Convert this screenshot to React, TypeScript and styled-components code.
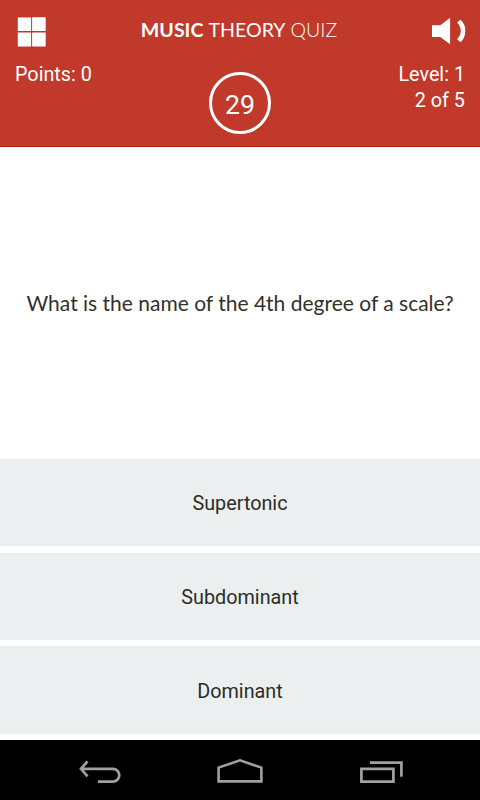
import React from "react";
import styled, { createGlobalStyle } from "styled-components";

const GlobalStyle = createGlobalStyle`
  *, *::before, *::after { box-sizing: border-box; }
  body { margin: 0; background: #fff; }
  button { font: inherit; color: inherit; border: 0; padding: 0; background: none; }
`;

const Screen = styled.div`
  display: flex;
  flex-direction: column;
  width: 480px;
  height: 800px;
  overflow: hidden;
  background: #fff;
  font-family: Roboto, sans-serif;
`;

const Header = styled.header`
  height: 147px;
  background: #c0392b;
  border-bottom: 1px solid #bf1d08;
  color: #fff;
`;

const TitleBar = styled.div`
  display: flex;
  justify-content: space-between;
  align-items: center;
  height: 62px;
  padding: 0 14px 0 17px;
`;

const IconButton = styled.button`
  display: flex;
  width: 35px;
  height: 32px;
`;

const Title = styled.h1`
  display: flex;
  gap: 5px;
  margin: 0 5px 2px 0;
  font: 400 19.6px/24px Lato, sans-serif;
`;

const Word = styled.span<{ $weight: number }>`
  font-weight: ${(p) => p.$weight};
`;

const Stats = styled.div`
  display: grid;
  grid-template-columns: 1fr 62px 1fr;
  padding: 0 15px;
`;

const Stat = styled.div<{ $align: "left" | "right" }>`
  text-align: ${(p) => p.$align};
  font-size: 19.8px;
  line-height: 26px;
`;

const Timer = styled.div`
  display: flex;
  align-items: center;
  justify-content: center;
  width: 62px;
  height: 62px;
  margin-top: 10px;
  border: 3px solid #fff;
  border-radius: 50%;
  font-size: 26.7px;
  line-height: 32px;
  padding-top: 4px;
`;

const Question = styled.main`
  flex: 1;
  display: flex;
  align-items: center;
  justify-content: center;
  color: #30312a;
  font: 400 21px/26px Lato, sans-serif;
  white-space: nowrap;
`;

const Answers = styled.div`
  display: grid;
  grid-auto-rows: 87.3px;
  gap: 6.4px;
  height: 281px;
`;

const Answer = styled.button`
  background: #ebeff0;
  color: #2c2d26;
  font-size: 19.8px;
  line-height: 24px;
  padding-top: 3px;
`;

const NavBar = styled.nav`
  display: flex;
  justify-content: space-between;
  align-items: center;
  height: 60px;
  padding: 0 76px;
  background: #000;
  color: #a0a0a0;
`;

const NavButton = styled.button`
  display: flex;
  width: 48px;
  height: 32px;
`;

const GridIcon = () => (
  <svg width="35" height="32" fill="#fff">
    <path d="M.8 2.6h13.3V16H.8zM15.1 2.3h13.6V16H15.1zM.8 17.5h13.3v14H.8zM15.1 17.5h13.6v14H15.1z" />
  </svg>
);

const SoundIcon = () => (
  <svg width="35" height="32" fill="#fff">
    <path d="M1 10.2h8.3l9.8-7.5v26.6L9.3 21.9H1z" />
    <path d="M29.5 4.8Q34.3 9 34.3 16t-4.8 11.3l-3.4-3Q29.8 20.5 29.8 16t-3.7-8.4z" />
  </svg>
);

const BackIcon = () => (
  <svg width="48" height="32" fill="none" stroke="currentColor" strokeWidth="2.7">
    <path d="M11.5 7.3 5 14.8l6.5 7.5M5 14.8h31.9a6.4 6.4 0 0 1 0 12.8H22" />
  </svg>
);

const HomeIcon = () => (
  <svg width="48" height="32" fill="none" stroke="currentColor" strokeWidth="2.6">
    <path d="M2.6 27.4V13.6L24 6.3l21.4 7.3v13.8z" />
  </svg>
);

const RecentIcon = () => (
  <svg width="48" height="32" fill="none" stroke="currentColor" strokeWidth="2.7">
    <path d="M5.4 14.8h32v12.8h-32zM14 8.6h31.4v14.2" />
  </svg>
);

const answers = ["Supertonic", "Subdominant", "Dominant"];

export default function App() {
  return (
    <Screen>
      <GlobalStyle />
      <Header>
        <TitleBar>
          <IconButton aria-label="Menu"><GridIcon /></IconButton>
          <Title>
            <Word $weight={700}>MUSIC</Word>
            <Word $weight={400}>THEORY</Word>
            <Word $weight={300}>QUIZ</Word>
          </Title>
          <IconButton aria-label="Sound"><SoundIcon /></IconButton>
        </TitleBar>
        <Stats>
          <Stat $align="left">Points: 0</Stat>
          <Timer>29</Timer>
          <Stat $align="right">Level: 1<br />2 of 5</Stat>
        </Stats>
      </Header>
      <Question>What is the name of the 4th degree of a scale?</Question>
      <Answers>
        {answers.map((answer) => <Answer key={answer}>{answer}</Answer>)}
      </Answers>
      <NavBar>
        <NavButton aria-label="Back"><BackIcon /></NavButton>
        <NavButton aria-label="Home"><HomeIcon /></NavButton>
        <NavButton aria-label="Recent apps"><RecentIcon /></NavButton>
      </NavBar>
    </Screen>
  );
}
